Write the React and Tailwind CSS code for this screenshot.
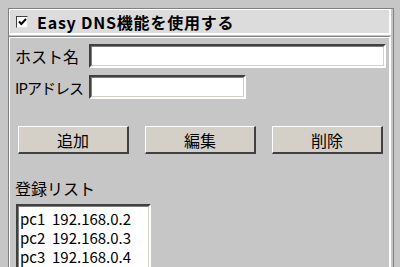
const font = { fontFamily: '"Noto Sans CJK JP", "Noto Sans", sans-serif' };

function Sunken({ className = "", children }) {
  return (
    <div className={`shrink-0 border-t-2 border-l-2 border-t-[#404040] border-l-[#404040] border-r-2 border-b-2 border-r-white border-b-white ${className}`}>
      <div className="h-full w-full border-t border-l border-t-[#808080] border-l-[#808080] border-r border-b border-r-[#d4d0c8] border-b-[#d4d0c8] bg-white">
        {children}
      </div>
    </div>
  );
}

function Btn({ children }) {
  return (
    <button className="w-[111px] h-[28px] border-t border-l border-t-white border-l-white border-r-2 border-b-2 border-r-[#404040] border-b-[#404040] bg-[#d4d0c8] text-[16px] text-black leading-none">
      {children}
    </button>
  );
}

export default function App() {
  return (
    <div className="w-[400px] h-[267px] overflow-hidden bg-[#c6c6c6] pt-2 pl-2 text-black" style={font}>
      <div className="w-[386px] border-l border-t border-r border-[#808080]">
        <div className="h-[26px] mr-[2px] bg-[#dcdcdc] border-t border-l border-t-white border-l-white border-r-2 border-b-2 border-r-white border-b-white flex items-center pl-[6px] gap-[9px]">
          <div className="w-[12px] h-[12px] bg-white border-t border-l border-t-[#404040] border-l-[#404040] border-r border-b border-r-[#e0e0e0] border-b-[#e0e0e0] flex items-center justify-center">
            <svg width="9" height="8" viewBox="0 0 9 8">
              <path d="M1 3.5 L3.3 6 L8 1" stroke="#000" strokeWidth="2" fill="none" />
            </svg>
          </div>
          <span className="text-[16px] font-bold tracking-[0.8px] leading-none whitespace-nowrap">Easy DNS機能を使用する</span>
        </div>
        <div className="mt-[1px] h-[240px] border-t border-[#808080] mr-[2px] border-r-2 border-r-white">
          <div className="h-full border-l border-t border-white pl-[5px] pt-[6px]">
            <div className="flex items-center h-[24px]">
              <span className="w-[74px] shrink-0 text-[16px] leading-none whitespace-nowrap">ホスト名</span>
              <Sunken className="w-[297px] h-[24px]" />
            </div>
            <div className="flex items-center h-[24px] mt-[7px]">
              <span className="w-[74px] shrink-0 text-[15px] leading-none tracking-[-1px] whitespace-nowrap">IPアドレス</span>
              <Sunken className="w-[157px] h-[24px]" />
            </div>
            <div className="flex gap-[16px] mt-[27px] pl-[3px]">
              <Btn>追加</Btn>
              <Btn>編集</Btn>
              <Btn>削除</Btn>
            </div>
            <div className="mt-[26px] text-[16px] leading-none">登録リスト</div>
            <Sunken className="mt-[8px] ml-[1px] w-[135px] h-[80px]">
              <div className="pl-[1px] pt-[2px] text-[15px] leading-[19px] whitespace-pre">
                <div>pc1  192.168.0.2</div>
                <div>pc2  192.168.0.3</div>
                <div>pc3  192.168.0.4</div>
              </div>
            </Sunken>
          </div>
        </div>
      </div>
    </div>
  );
}
